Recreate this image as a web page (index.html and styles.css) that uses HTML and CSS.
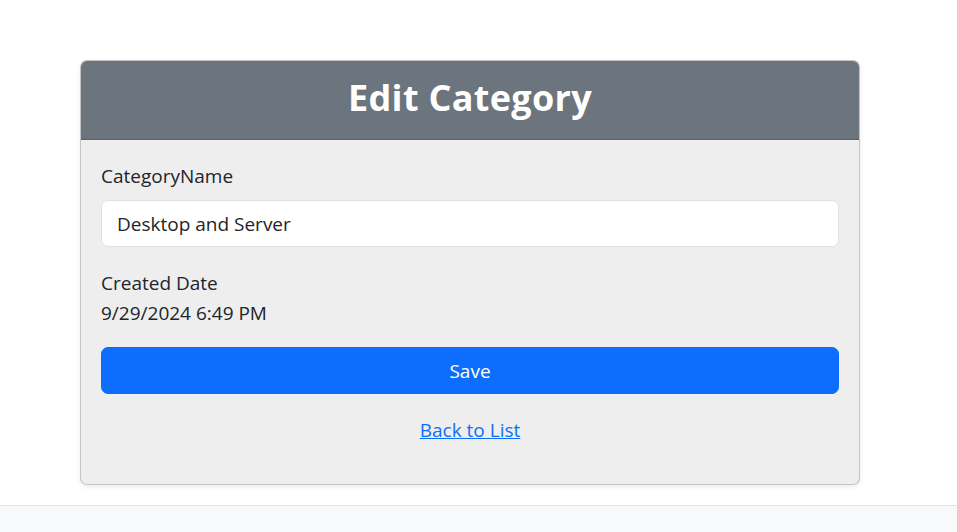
FILE: index.html
```html
<!DOCTYPE html>
<html lang="en">
<head>
<meta charset="utf-8">
<title>Edit Category</title>
<link rel="stylesheet" href="styles.css">
</head>
<body>
<main class="page">
  <div class="card">
    <div class="card-header">
      <h3 class="title">Edit Category</h3>
    </div>
    <div class="card-body">
      <form class="form">
        <div class="field">
          <label class="label" for="name">CategoryName</label>
          <input class="input" id="name" type="text" value="Desktop and Server">
        </div>
        <div class="field">
          <div class="label-plain">Created Date</div>
          <div class="value">9/29/2024 6:49 PM</div>
        </div>
        <button class="btn" type="button">Save</button>
      </form>
      <div class="back">
        <a class="link" href="#">Back to List</a>
      </div>
    </div>
  </div>
</main>
<footer class="footer"></footer>
</body>
</html>
```

FILE: styles.css
```css
* { box-sizing: border-box; }
html, body { margin: 0; padding: 0; }
body {
  font-family: "Open Sans", "Noto Sans", sans-serif;
  font-size: 19px;
  line-height: 30px;
  color: #212529;
  background: #ffffff;
  height: 532px;
  overflow: hidden;
}
.page {
  padding: 60px 0 0 80px;
}
.card {
  width: 780px;
  background: #eeeeee;
  border: 1px solid rgba(0,0,0,0.175);
  border-radius: 7px;
  box-shadow: 0 2px 5px rgba(0,0,0,0.075);
  overflow: hidden;
}
.card-header {
  background: #6c757d;
  border-bottom: 1px solid rgba(0,0,0,0.175);
  height: 79px;
  padding-bottom: 4px;
  display: flex;
  align-items: center;
  justify-content: center;
}
.title {
  margin: 0;
  color: #ffffff;
  font-size: 36px;
  font-weight: 700;
  line-height: 40px;
  letter-spacing: 0.3px;
}
.card-body {
  padding: 21px 20px 19px 20px;
}
.form { margin: 0; }
.field { margin-bottom: 20px; }
.label {
  display: block;
  margin-bottom: 9px;
}
.input {
  display: block;
  width: 100%;
  height: 47px;
  padding: 7px 15px;
  font: inherit;
  color: #212529;
  background: #ffffff;
  border: 1px solid #dee2e6;
  border-radius: 7px;
  outline: none;
}
.label-plain { padding-top: 1px; margin-bottom: -1px; }
.value { padding-top: 1px; margin-bottom: -1px; }
.btn {
  display: block;
  width: 100%;
  height: 47px;
  padding-top: 2px;
  font: inherit;
  color: #ffffff;
  background: #0d6efd;
  border: 1px solid #0d6efd;
  border-radius: 7px;
  cursor: pointer;
}
.back {
  margin-top: 21px;
  margin-bottom: 20px;
  text-align: center;
}
.link {
  color: #0d6efd;
  text-decoration: underline;
}
.footer {
  margin-top: 20px;
  height: 27px;
  background: #f8f9fa;
  border-top: 1px solid #dee2e6;
}
```
